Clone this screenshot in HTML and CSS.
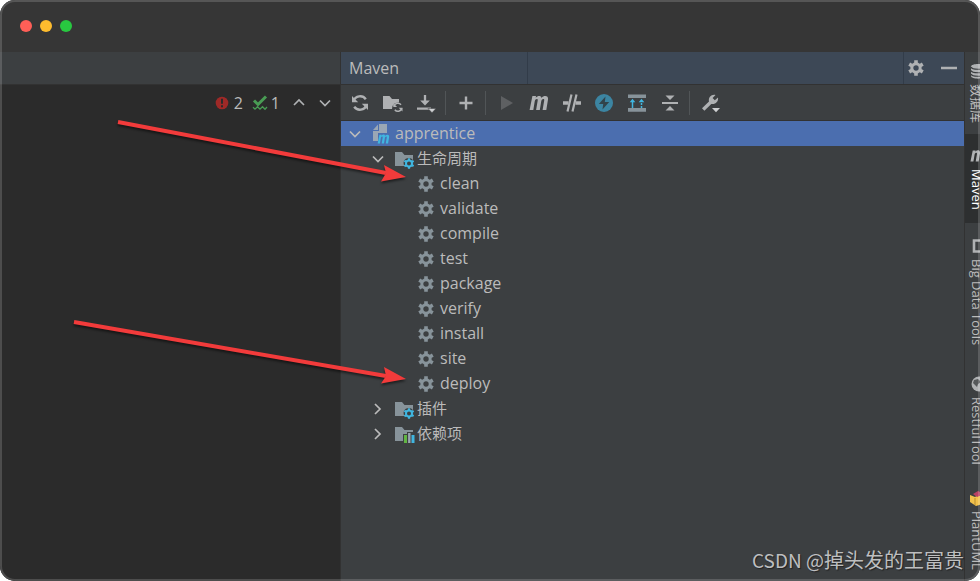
FILE: index.html
```html
<!DOCTYPE html>
<html lang="zh-CN">
<head>
<meta charset="utf-8">
<meta name="viewport" content="width=device-width, initial-scale=1">
<title>Maven</title>
<link rel="stylesheet" href="styles.css">
</head>
<body>
<svg class="sprite" aria-hidden="true">
  <symbol id="gear" viewBox="0 0 16 16">
    <circle cx="8" cy="8" r="4.2" fill="none" stroke="currentColor" stroke-width="3"/>
    <path d="M8 .2V4M8 12v3.8M1.2 4.1 4.6 6M11.4 10l3.4 1.9M1.2 11.9 4.6 10M11.4 6l3.4-1.9" fill="none" stroke="currentColor" stroke-width="3.6"/>
  </symbol>
  <symbol id="down" viewBox="0 0 16 16"><path d="M3 5.5 8 10.5 13 5.5" fill="none" stroke="currentColor" stroke-width="1.7"/></symbol>
  <symbol id="right" viewBox="0 0 16 16"><path d="M5 3 10 8 5 13" fill="none" stroke="currentColor" stroke-width="1.7"/></symbol>
  <symbol id="up" viewBox="0 0 16 16"><path d="M3 10 8 5 13 10" fill="none" stroke="currentColor" stroke-width="1.7"/></symbol>
  <symbol id="folder-gear" viewBox="0 0 20 20">
    <path d="M0 3h7l2.5 3H18v5.2a5 5 0 0 0-8.6 5.800H0z" fill="#87939a"/>
    <circle cx="14" cy="14.500" r="3" fill="none" stroke="#40b6e0" stroke-width="2"/>
    <path d="M14 9.200v2.300M14 17.500v2.300M9.400 11.800l1.900 1.100M16.700 16l1.900 1.100M9.400 17.200l1.900-1.100M16.700 13l1.900-1.100" stroke="#40b6e0" stroke-width="2.200"/>
  </symbol>
  <symbol id="m" viewBox="0 0 20 16">
    <path d="M3.400 1H7L6.700 2.800C8.800.3 12 .3 12.500 2.900 14.700.2 19.800.2 19 4.600L17.300 15h-3.700L15.200 5.400c.4-2.200-2.400-1.900-3 1L10.800 15H7.100L8.700 5.400c.4-2.200-2.500-1.900-3 1L4.300 15H.6z" fill="currentColor"/>
  </symbol>
</svg>

<div class="window">
  <header class="titlebar">
    <span class="light close"></span><span class="light minimize"></span><span class="light maximize"></span>
  </header>

  <div class="workspace">
    <section class="editor">
      <div class="editor-tabs"></div>
      <div class="inspections">
        <svg class="i-error" viewBox="0 0 14 14" aria-hidden="true"><circle cx="7" cy="7" r="6.300" fill="#9e2927"/><path d="M7 2.800v5M7 9.200v2" stroke="#2b2b2b" stroke-width="2"/></svg>
        <span class="count errors">2</span>
        <svg class="i-check" viewBox="0 0 16 16" aria-hidden="true"><path d="M2 5.500 6 9.500 14 1.500" fill="none" stroke="#499c54" stroke-width="3"/><path d="M1 12.200 3 14.200 5.500 11.700 8 14.200 10.500 11.700 13 14.200 15 12" fill="none" stroke="#499c54" stroke-width="1.300"/></svg>
        <span class="count fixed">1</span>
        <button class="nav-button" aria-label="Previous"><svg viewBox="0 0 16 16"><use href="#up"/></svg></button>
        <button class="nav-button" aria-label="Next"><svg viewBox="0 0 16 16"><use href="#down"/></svg></button>
      </div>
    </section>

    <main class="panel">
      <div class="panel-header">
        <h1 class="panel-title">Maven</h1>
        <div class="panel-actions">
          <button aria-label="Settings"><svg viewBox="0 0 16 16"><use href="#gear"/></svg></button>
          <button aria-label="Hide"><svg viewBox="0 0 16 16"><path d="M0 8h16" stroke="currentColor" stroke-width="2.400"/></svg></button>
        </div>
      </div>

      <div class="toolbar">
        <div class="tools">
          <button aria-label="Reload"><svg viewBox="0 0 20 20"><path d="M3.500 8A7 7 0 0 1 15.800 6.200M16.500 12A7 7 0 0 1 4.200 13.800" fill="none" stroke="currentColor" stroke-width="2.400"/><path d="M2 3v6.200h6.200zM18 17v-6.200h-6.200z" fill="currentColor"/></svg></button>
          <button aria-label="Generate sources"><svg viewBox="0 0 20 20"><path d="M0 3h6.500l2.500 3H16v3.500a6 6 0 0 0-7 6.500H0z" fill="currentColor"/><path d="M11 13.200a4 4 0 0 1 7-1.400M18.800 15.300a4 4 0 0 1-7 1.400" fill="none" stroke="currentColor" stroke-width="1.500"/><path d="M10.300 10.200v3.800h3.800zM19.500 18.500v-3.800h-3.800z" fill="currentColor"/></svg></button>
          <button aria-label="Download"><svg viewBox="0 0 20 20"><path d="M9 2v8M1 15.700h14" stroke="currentColor" stroke-width="2.300"/><path d="M4.200 7.500h9.600L9 12.500z" fill="currentColor"/><path d="M12 15.500h8l-4 4.200z" fill="#ced0d2" stroke="#3c3f41" stroke-width=".5"/></svg></button>
        </div>
        <span class="separator"></span>
        <button aria-label="Add"><svg viewBox="0 0 20 20"><path d="M10 3.500v13M3.500 10h13" stroke="currentColor" stroke-width="2.400"/></svg></button>
        <span class="separator"></span>
        <div class="tools run-tools">
          <button class="disabled" aria-label="Run" disabled><svg viewBox="0 0 20 20"><path d="M5 3v14l12-7z" fill="currentColor"/></svg></button>
          <button aria-label="Execute goal"><svg viewBox="0 0 20 16"><use href="#m"/></svg></button>
          <button aria-label="Offline mode"><svg viewBox="0 0 20 20"><path d="M1 10h5.500M13.500 10H19" stroke="currentColor" stroke-width="3.400"/><path d="M5.500 18.500 9.500 1.500M10.500 18.500 14.500 1.500" stroke="currentColor" stroke-width="2.200"/></svg></button>
          <button aria-label="Skip tests"><svg viewBox="0 0 20 20"><circle cx="10" cy="10" r="9" fill="#3c85a2"/><path d="M11.500 3.500 4.800 11h4.400l-.7 5.500L15.200 9h-4.400z" fill="#31434b"/></svg></button>
          <button aria-label="Dependencies"><svg viewBox="0 0 20 20"><path d="M1 3.200h18M1 16.900h18" stroke="#87939a" stroke-width="3.600"/><path d="M5.500 15V8" stroke="#40b6e0" stroke-width="1.500"/><path d="M14.500 15V8" stroke="#40b6e0" stroke-width="1.500" stroke-dasharray="2 1"/><path d="M2.700 9.300 5.500 5.700l2.800 3.600zM11.700 9.300l2.800-3.600 2.800 3.600z" fill="#40b6e0"/></svg></button>
          <button aria-label="Collapse all"><svg viewBox="0 0 20 20"><path d="M2 10h16" stroke="currentColor" stroke-width="2"/><path d="M5.500 2.500h9L10 7zM5.500 17.500h9L10 13z" fill="currentColor"/></svg></button>
        </div>
        <span class="separator"></span>
        <button aria-label="Maven settings"><svg viewBox="0 0 20 20"><path d="M2 15.200 9 8.600C8 4.500 11.500 1 15.500 2L12.600 5l2.200 2.300L18 4.500c.8 4-2.800 7.300-6.700 6.400L4.400 17.700z" fill="currentColor"/><path d="M12 15h8l-4 4.200z" fill="#ced0d2"/></svg></button>
      </div>

      <ul class="tree">
        <li class="row project selected">
          <svg class="chevron" viewBox="0 0 16 16"><use href="#down"/></svg>
          <svg class="icon" viewBox="0 0 18 20"><path d="M7 0h8v9H6v8H1V7h6z" fill="#9aa7b5"/><path d="M1 6 6 .5V6z" fill="#9aa7b5"/><g color="#40b6e0"><use href="#m" x="5" y="10" width="13" height="10"/></g></svg>
          <span>apprentice</span>
        </li>
        <li class="row group">
          <svg class="chevron" viewBox="0 0 16 16"><use href="#down"/></svg>
          <svg class="icon folder" viewBox="0 0 20 20"><use href="#folder-gear"/></svg>
          <span>生命周期</span>
        </li>
        <li class="row goal"><svg class="icon" viewBox="0 0 16 16"><use href="#gear"/></svg><span>clean</span></li>
        <li class="row goal"><svg class="icon" viewBox="0 0 16 16"><use href="#gear"/></svg><span>validate</span></li>
        <li class="row goal"><svg class="icon" viewBox="0 0 16 16"><use href="#gear"/></svg><span>compile</span></li>
        <li class="row goal"><svg class="icon" viewBox="0 0 16 16"><use href="#gear"/></svg><span>test</span></li>
        <li class="row goal"><svg class="icon" viewBox="0 0 16 16"><use href="#gear"/></svg><span>package</span></li>
        <li class="row goal"><svg class="icon" viewBox="0 0 16 16"><use href="#gear"/></svg><span>verify</span></li>
        <li class="row goal"><svg class="icon" viewBox="0 0 16 16"><use href="#gear"/></svg><span>install</span></li>
        <li class="row goal"><svg class="icon" viewBox="0 0 16 16"><use href="#gear"/></svg><span>site</span></li>
        <li class="row goal"><svg class="icon" viewBox="0 0 16 16"><use href="#gear"/></svg><span>deploy</span></li>
        <li class="row group">
          <svg class="chevron" viewBox="0 0 16 16"><use href="#right"/></svg>
          <svg class="icon folder" viewBox="0 0 20 20"><use href="#folder-gear"/></svg>
          <span>插件</span>
        </li>
        <li class="row group">
          <svg class="chevron" viewBox="0 0 16 16"><use href="#right"/></svg>
          <svg class="icon folder" viewBox="0 0 20 20"><path d="M0 3h7l2.500 3H18v2h-6v2H8v7H0z" fill="#87939a"/><path d="M10.500 11v8" stroke="#62b543" stroke-width="3"/><path d="M14.300 9v10" stroke="#9aa7b0" stroke-width="2.400"/><path d="M18 11v8" stroke="#40b6e0" stroke-width="3"/></svg>
          <span>依赖项</span>
        </li>
      </ul>
    </main>

    <nav class="stripe">
      <button class="stripe-tab database"><svg viewBox="0 0 16 16"><path d="M1 3.500c0-3.500 14-3.500 14 0v9.500c0 3.500-14 3.500-14 0z" fill="#afb1b3"/><path d="M1 4c1 3 13 3 14 0M1 7.500c1 3 13 3 14 0M1 11c1 3 13 3 14 0" fill="none" stroke="#3c3f41" stroke-width="1.200"/></svg><span>数据库</span></button>
      <button class="stripe-tab maven active"><svg viewBox="0 0 20 16"><use href="#m"/></svg><span>Maven</span></button>
      <button class="stripe-tab bigdata"><svg viewBox="0 0 16 16"><path d="M4 2.500h8v11H4z" fill="none" stroke="#afb1b3" stroke-width="2.600"/></svg><span>Big Data Tools</span></button>
      <button class="stripe-tab restful"><svg viewBox="0 0 16 16"><circle cx="9" cy="8" r="7.500" fill="#afb1b3"/><path d="M4 4 8 3l3 3-3 2-1 3-4-4zM10 10l4-1-3 5z" fill="#55585a"/></svg><span>RestfulTool</span></button>
      <button class="stripe-tab plantuml"><svg viewBox="0 0 16 16"><path d="M0 5 5 7l3-2 7 2v6l-9 3-6-4z" fill="#f2c24b"/><path d="m3 4 5-3 6 3-7 3z" fill="#b94163"/><path d="M5 8v7" stroke="#b98c31"/></svg><span>PlantUML</span></button>
    </nav>
  </div>

  <svg class="arrows" width="420" height="400" viewBox="0 0 420 400" aria-hidden="true">
    <g class="arrow"><path d="M118 122 386 173" fill="none" stroke="#f23b3b" stroke-width="4"/><path d="M406 177 381 181.500 386 173 384 165z" fill="#f23b3b"/></g>
    <g class="arrow"><path d="M74 322 386 376" fill="none" stroke="#f23b3b" stroke-width="4"/><path d="M406 379 381 383.500 386 376 384 367z" fill="#f23b3b"/></g>
  </svg>
  <p class="watermark"><span class="site">CSDN @</span>掉头发的王富贵</p>
</div>
</body>
</html>
```

FILE: styles.css
```css
* { box-sizing: border-box; }

body {
  margin: 0;
  background: #fff;
  color: #bbbbbb;
  font: 16px/25px "Open Sans", "Noto Sans CJK SC", sans-serif;
}

button {
  display: flex;
  align-items: center;
  justify-content: center;
  padding: 0;
  border: 0;
  background: none;
  color: #afb1b3;
  font: inherit;
}

svg { flex: none; display: block; }

.sprite { position: absolute; width: 0; height: 0; }

.window {
  position: relative;
  display: flex;
  flex-direction: column;
  height: 100vh;
  min-height: 460px;
  overflow: hidden;
  border-radius: 15px;
  background: #3c3f41;
}

.window::after {
  content: "";
  position: absolute;
  inset: 0;
  border: 2px solid rgba(255, 255, 255, 0.16);
  border-radius: inherit;
  pointer-events: none;
}

.titlebar {
  flex: none;
  display: flex;
  align-items: center;
  gap: 8px;
  height: 52px;
  padding: 0 20px;
  background: #363636;
}

.light { width: 12px; height: 12px; border-radius: 50%; }
.close { background: #ff5f57; }
.minimize { background: #febc2e; }
.maximize { background: #28c840; }

.workspace {
  flex: 1;
  min-height: 0;
  display: grid;
  grid-template-columns: minmax(200px, 340fr) minmax(0, 624fr) 16px;
}

.editor { background: #2b2b2b; }

.editor-tabs {
  height: 33px;
  border-bottom: 1px solid #323232;
  background: #3c3f41;
}

.inspections {
  display: flex;
  align-items: center;
  justify-content: flex-end;
  height: 36px;
  padding-right: 7px;
}

.i-error { width: 14px; height: 14px; }
.i-check { width: 16px; height: 16px; }
.count { line-height: 24px; }
.errors { margin: 0 9px 0 5px; }
.fixed { margin: 0 11px 0 3px; }
.nav-button + .nav-button { margin-left: 10px; }
.nav-button svg { width: 16px; height: 16px; }

.panel {
  border-left: 1px solid #323232;
  background: #3c3f41;
}

.panel-header {
  display: flex;
  justify-content: space-between;
  height: 33px;
  border-bottom: 1px solid #323232;
  background: #3d4856;
}

.panel-title {
  width: 30%;
  margin: 0;
  padding-left: 8px;
  border-right: 1px solid #323c49;
  font-size: 16px;
  font-weight: 400;
  line-height: 32px;
}

.panel-actions {
  display: flex;
  gap: 17px;
  padding: 0 7px 0 4px;
  border-left: 1px solid #323c49;
}

.panel-actions svg { width: 16px; height: 16px; }

.toolbar {
  display: flex;
  align-items: center;
  height: 36px;
  padding-left: 9px;
  border-bottom: 1px solid #323232;
}

.toolbar svg { width: 20px; height: 20px; }
.tools { display: flex; gap: 13px; }
.run-tools { width: 184px; gap: 0; justify-content: space-between; }
.disabled { color: #5e6062; }

.separator {
  width: 1px;
  height: 24px;
  margin: 0 10px 0 9px;
  background: #515557;
}

.tree { margin: 0; padding: 0; list-style: none; }

.row {
  display: flex;
  align-items: center;
  height: 25px;
}

.project { padding-left: 6px; }
.group { padding-left: 29px; font-size: 15px; }
.goal { padding-left: 77px; }
.selected { background: #4b6eaf; }

.chevron { width: 16px; height: 16px; margin-right: 9px; }
.icon { width: 18px; height: 20px; margin-right: 5px; color: #87939a; }
.folder { width: 20px; height: 20px; margin-right: 2px; }
.goal .icon { width: 16px; height: 16px; margin-right: 6px; }

.stripe {
  display: flex;
  flex-direction: column;
  overflow: hidden;
  border-left: 1px solid #323232;
  background: #3c3f41;
}

.stripe-tab {
  flex: none;
  flex-direction: column;
  justify-content: flex-start;
  align-items: flex-start;
  gap: 5px;
  width: 24px;
  padding: 11px 0 0 5px;
  color: #bbbbbb;
  font-size: 13px;
  line-height: 14px;
}

.stripe-tab span {
  writing-mode: vertical-rl;
  text-orientation: sideways;
  white-space: nowrap;
}

.stripe-tab svg { width: 16px; height: 16px; color: #afb1b3; }

.database { height: 82px; }
.maven { height: 89px; padding-top: 14px; }
.bigdata { height: 138px; padding-top: 15px; }
.restful { height: 116px; padding-top: 15px; }
.plantuml { padding-top: 13px; }
.active { background: #2d2f30; color: #fff; }

.arrows { position: absolute; top: 0; left: 0; pointer-events: none; }
.arrow { filter: drop-shadow(0 2px 1px rgba(0, 0, 0, 0.5)); }

.watermark {
  position: absolute;
  right: 16px;
  bottom: 6px;
  margin: 0;
  color: #bebfc0;
  font: 20px/30px "Noto Sans CJK SC", sans-serif;
  text-shadow: 1px 1px 1px #222;
}

.site { font-size: 19px; }
```
